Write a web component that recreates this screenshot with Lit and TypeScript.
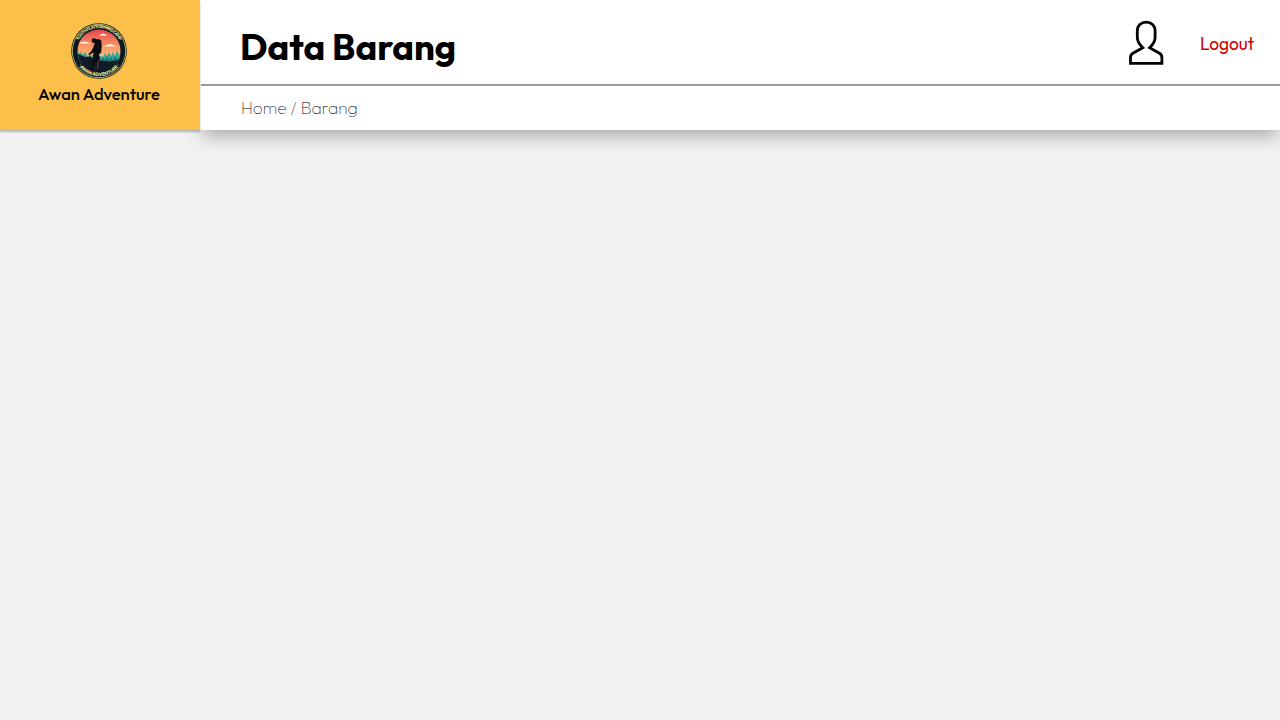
import { LitElement, html, css } from "lit";
import { customElement } from "lit/decorators.js";

@customElement("brand-logo")
class BrandLogo extends LitElement {
  static styles = css`
    :host { display: block; width: 56px; height: 56px; margin-right: 2px; }
    svg { display: block; }
    text { font-family: "Outfit", sans-serif; font-weight: 700; fill: #f0e79a; }
  `;
  render() {
    return html`<svg width="56" height="56" viewBox="0 0 56 56">
      <defs>
        <clipPath id="scene"><circle cx="28" cy="28" r="21.5" /></clipPath>
        <linearGradient id="sky" x1="0" y1="0" x2="0" y2="1">
          <stop offset=".2" stop-color="#e34a50" />
          <stop offset=".45" stop-color="#f37a5c" />
          <stop offset=".85" stop-color="#fdbb78" />
        </linearGradient>
        <path id="top" d="M5 28a23 23 0 0 1 46 0" />
        <path id="bottom" d="M2.8 28a25.2 25.2 0 0 0 50.4 0" />
      </defs>
      <circle cx="28" cy="28" r="27.8" fill="#0d1a20" />
      <circle cx="28" cy="28" r="26.7" fill="none" stroke="#d8cf7c" stroke-width=".8" />
      <g clip-path="url(#scene)">
        <rect width="56" height="38" fill="url(#sky)" />
        <path d="M7 20.5l4-1.4 3-.6 3 1 3 1.200zM27 12.500l3-1 2-1 3 .9 2 1.100zM32 23.400l4-1.300 3-1.200 3 1.100 4 1.400z" fill="#fdf1e0" />
        <path d="M4 38v-7l3-3 2 3 1-3 2 4 2-3 3 5 4-2 5 1 4 0 2 1 2-4 2 3 2-4 2 4 2-4 2 4 2-6 2 5 4-3v12H4z" fill="#3aa59a" />
        <path d="M30 38l2-4 2 3 2-4 2 4 2-3 2 3 2-4 2 3 4-2v6H30z" fill="#237872" />
        <path d="M4 31.500l5 0 5 2.500 5-.5 5 2.500 6 1.500 9 1 6-1 7-1v20H4z" fill="#101d29" />
      </g>
      <circle cx="23" cy="17.600" r="2.400" fill="#0c0d12" />
      <path d="M20.500 15.800l5 .4 1 2.800-3 1z" fill="#0c0d12" />
      <path d="M25 16.500l3-.5 2.200 1.500.5 5-.5 7-2.200 2 .8 4-.3 7-.9 9h-2l.7-10-1.600-4-2.300 6-2.200 7-1.500-.4 2-8 1.300-7 .4-6-1.600 1.600-3 1.400-.4-1.200 3.100-3 1.900-4z" fill="#0c0d12" />
      <path d="M18.800 30l-2 20" stroke="#0c141b" stroke-width=".7" />
      <path d="M27.300 37l-.6 10" stroke="#8b4a3f" stroke-width=".9" />
      <text font-size="4.300"><textPath href="#top" startOffset="50%" text-anchor="middle" textLength="50">YOUTH PLATFORMING CAMP</textPath></text>
      <text font-size="5"><textPath href="#bottom" startOffset="50%" text-anchor="middle" textLength="47">· AWAN ADVENTURE ·</textPath></text>
    </svg>`;
  }
}

@customElement("app-root")
class AppRoot extends LitElement {
  static styles = css`
    :host {
      display: block; height: 720px; overflow: hidden; background: #f1f1f1; color: #000;
      font-family: "Outfit", "Inter", sans-serif;
    }
    .header { display: flex; height: 130px; }
    .brand {
      position: relative; z-index: 1;
      box-sizing: border-box; width: 200px; padding-top: 23px; display: flex; flex-direction: column;
      align-items: center; background: #fcbf49;
      box-shadow: 0 2px 2px rgba(0, 0, 0, .25);
    }
    .name { margin: 3px 2px 0 0; font-size: 16.6px; line-height: 24px; font-weight: 500; white-space: nowrap; }
    .main { width: 1080px; background: #fff; box-shadow: 0 9px 16px -3px rgba(0, 0, 0, .3); }
    .top { display: flex; height: 84px; align-items: center; margin-left: 1px; border-bottom: 2px solid #9b9b9b; }
    .title { flex: 1; margin: 8px 0 0 39px; font-size: 36.5px; line-height: 46px; font-weight: 700; }
    .user { width: 36px; height: 46px; margin: 2px 36px 0 0; }
    .logout { width: 80px; margin-top: 3px; font-size: 17.3px; line-height: 24px; font-weight: 400; color: #d00000; }
    .crumbs { padding: 10px 0 0 41px; font-size: 17.3px; line-height: 24px; font-weight: 100; color: #000; }
  `;
  render() {
    return html`<header class="header">
      <div class="brand"><brand-logo></brand-logo><div class="name">Awan Adventure</div></div>
      <div class="main">
        <div class="top">
          <div class="title">Data Barang</div>
          <svg class="user" viewBox="0 0 36 46" fill="none" stroke="#000" stroke-width="2.8">
            <path d="M2.5 43.4v-5.8c0-2.1.7-3.3 2.4-4.3l9.9-5.6C11.5 24.6 9.3 21 9.3 17.5v-6.8c0-5 3.7-8.6 8.9-8.6s8.9 3.6 8.9 8.6v6.8c0 3.5-2.2 7.1-5.5 10.2l9.9 5.6c1.7 1 2.4 2.2 2.4 4.3v5.8z" />
          </svg>
          <div class="logout">Logout</div>
        </div>
        <div class="crumbs">Home / Barang</div>
      </div>
    </header>`;
  }
}
